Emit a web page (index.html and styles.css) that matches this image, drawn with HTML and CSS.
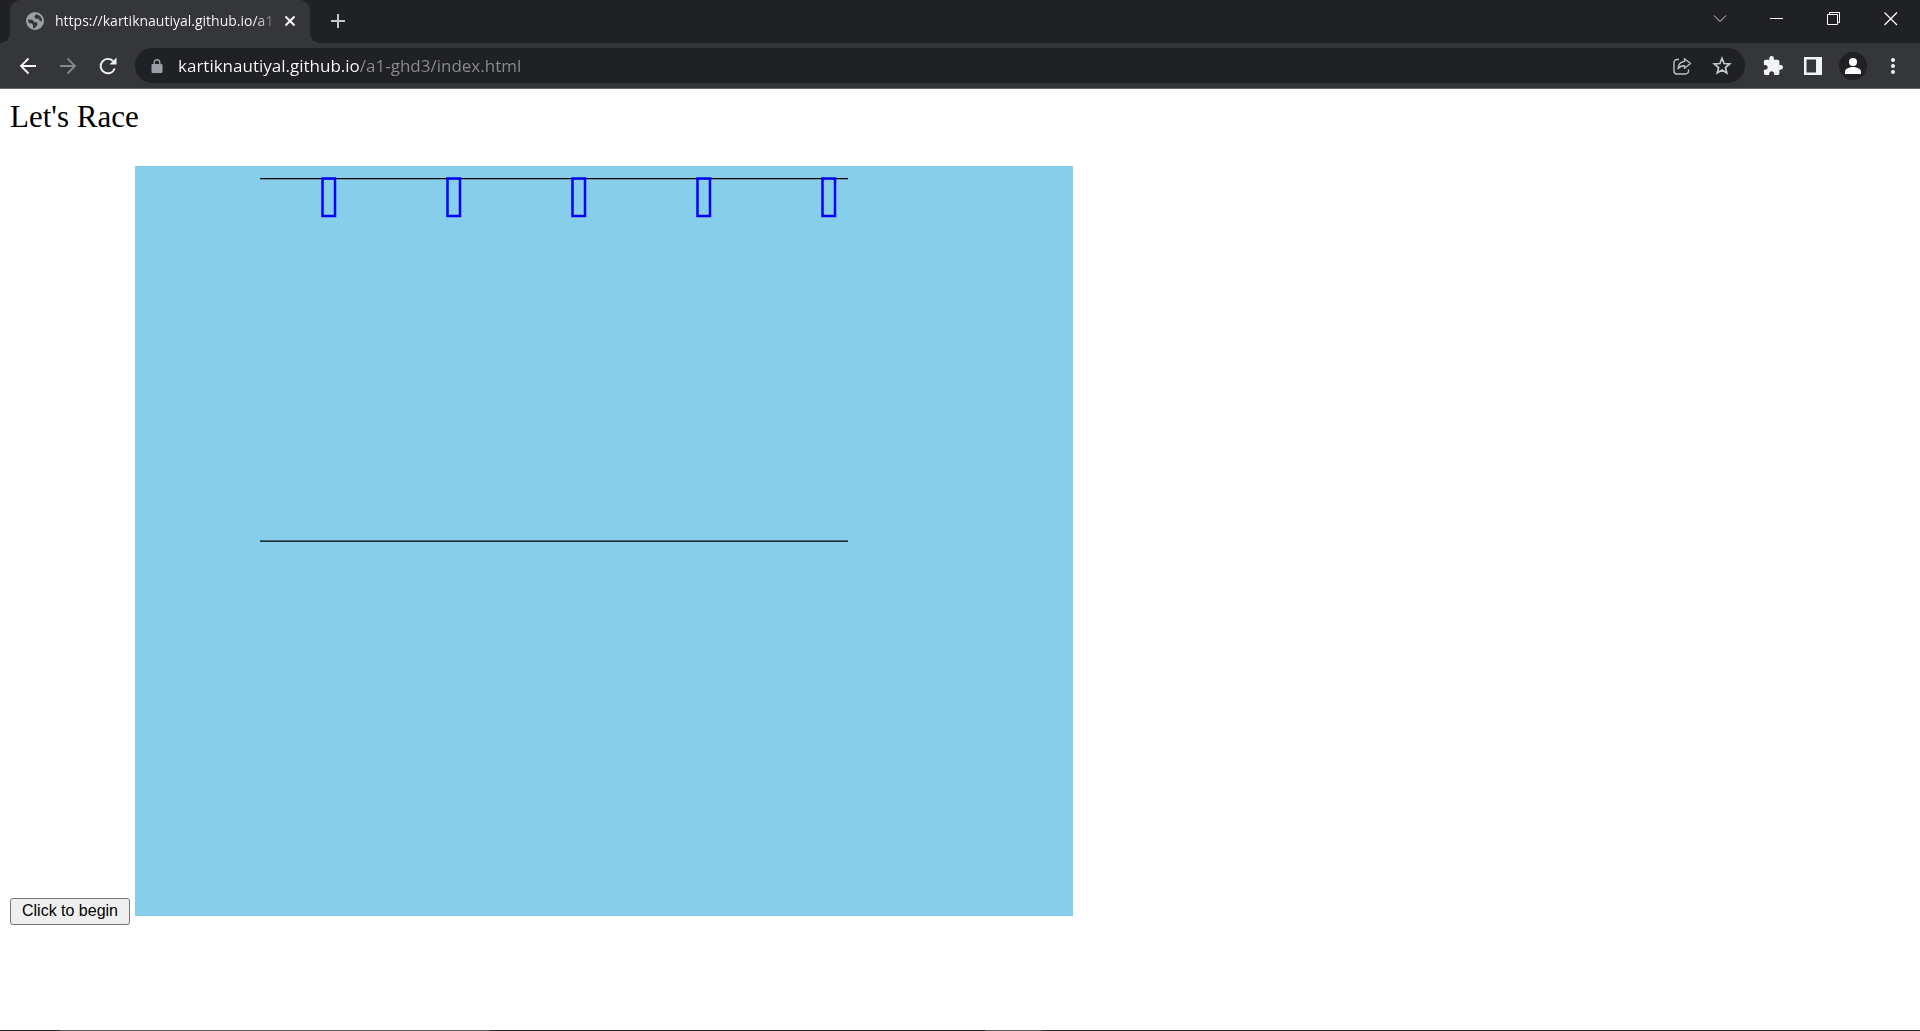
FILE: index.html
```
<!DOCTYPE html>
<html lang="en">
<head>
<meta charset="utf-8">
<title>Let's Race</title>
<link rel="stylesheet" href="styles.css">
</head>
<body>
<header class="browser">
  <div class="tabstrip">
    <div class="tab">
      <svg class="favicon" viewBox="0 0 18 18" aria-hidden="true"><circle cx="9" cy="9" r="9" fill="#9aa0a6"/><path d="M2 7.5l4.500.300 2 2.400h2.800v2.800l-2 2.700-2.300.500v-3.300l-1.700-1.700H3A7 7 0 0 1 2 7.500z" fill="#35363a"/><path d="M10 2.200l-1.700 2.500 1.700 2.300 2.500-.400 1.300 2.500 2.300.300A7 7 0 0 0 10 2.200z" fill="#35363a"/></svg>
      <span class="tab-title">https://kartiknautiyal.github.io/a1</span>
      <button class="plain tab-close" aria-label="Close tab"><svg width="12" height="12" viewBox="0 0 12 12"><path d="M1.500 1.500l9 9m0-9l-9 9" stroke="#fff" stroke-width="2" fill="none"/></svg></button>
    </div>
    <button class="plain new-tab" aria-label="New tab"><svg width="16" height="16" viewBox="0 0 16 16"><path d="M8 1v14M1 8h14" stroke="#c4c7cb" stroke-width="2" fill="none"/></svg></button>
    <div class="window-controls">
      <button class="plain window-button" aria-label="Search tabs"><svg width="14" height="8" viewBox="0 0 14 8"><path d="M1 .500l6 6 6-6" stroke="#d8d8d8" fill="none"/></svg></button>
      <button class="plain window-button" aria-label="Minimize"><svg width="14" height="14" viewBox="0 0 14 14"><path d="M0 6.500h13" stroke="#fff" fill="none"/></svg></button>
      <button class="plain window-button" aria-label="Restore"><svg width="14" height="14" viewBox="0 0 14 14"><path d="M.500 2.500h10v10H.500zM2.500 2.500v-2h10v10h-2" stroke="#fff" fill="none"/></svg></button>
      <button class="plain window-button" aria-label="Close"><svg width="14" height="14" viewBox="0 0 14 14"><path d="M.500.500l12.500 12.500m0-12.500L.500 13" stroke="#fff" stroke-width="1.200" fill="none"/></svg></button>
    </div>
  </div>
  <div class="toolbar">
    <button class="plain tool" aria-label="Back"><svg width="18" height="18" viewBox="0 0 18 18"><path d="M17 9H2m7.500-7.500L2 9l7.500 7.500" stroke="#fff" stroke-width="1.800" fill="none"/></svg></button>
    <button class="plain tool" aria-label="Forward"><svg width="18" height="18" viewBox="0 0 18 18"><path d="M1 9h15M8.500 1.500L16 9l-7.500 7.500" stroke="#85878a" stroke-width="1.800" fill="none"/></svg></button>
    <button class="plain tool" aria-label="Reload"><svg width="18" height="18" viewBox="0 0 18 18"><path d="M15.700 11.500A7.200 7.200 0 1 1 14 4" stroke="#f1f3f4" stroke-width="1.900" fill="none"/><path d="M17.500.500v7h-7z" fill="#f1f3f4"/></svg></button>
    <div class="omnibox">
      <svg class="lock" width="12" height="14" viewBox="0 0 12 14" aria-hidden="true"><path d="M3.200 6V3.500a2.800 2.800 0 0 1 5.600 0V6" stroke="#9aa0a6" stroke-width="1.400" fill="none"/><rect x=".500" y="5" width="11" height="9" rx="1.300" fill="#9aa0a6"/></svg>
      <input class="address" type="text" aria-label="Address" value="kartiknautiyal.github.io/a1-ghd3/index.html">
      <button class="plain tool" aria-label="Share"><svg width="19" height="18" viewBox="0 0 19 18"><path d="M6 2.500H4a3 3 0 0 0-3 3V14a3 3 0 0 0 3 3h8.500a3 3 0 0 0 3-3v-1.500" stroke="#bdc1c6" stroke-width="1.400" fill="none"/><path d="M11.500 1.700l6 4.800-6 4.800V8.700C8.500 8.600 6.500 9.500 5 11.700c.300-4 2.700-6.900 6.500-7.300z" stroke="#bdc1c6" stroke-width="1.400" stroke-linejoin="round" fill="none"/></svg></button>
      <button class="plain tool" aria-label="Bookmark"><svg width="20" height="20" viewBox="0 0 20 20"><path d="M10 2.300l2.100 5.200 5.600.400-4.300 3.600 1.400 5.500-4.800-3-4.800 3 1.400-5.500-4.300-3.600 5.600-.400z" stroke="#c4c7cb" stroke-width="1.700" fill="none"/></svg></button>
    </div>
    <button class="plain tool" aria-label="Extensions"><svg width="20" height="20" viewBox="1 1 22 22"><path fill="#f1f3f4" d="M20.500 11H19V7c0-1.100-.900-2-2-2h-4V3.500a2.500 2.500 0 0 0-5 0V5H4c-1.100 0-1.990.900-1.990 2v3.800H3.500c1.490 0 2.700 1.210 2.700 2.700s-1.210 2.700-2.700 2.700H2V20c0 1.100.900 2 2 2h3.800v-1.500c0-1.490 1.210-2.700 2.700-2.700s2.700 1.210 2.700 2.700V22H17c1.100 0 2-.900 2-2v-4h1.500a2.500 2.500 0 0 0 0-5z"/></svg></button>
    <button class="plain tool" aria-label="Side panel"><svg width="18" height="18" viewBox="0 0 18 18"><path fill="#f1f3f4" fill-rule="evenodd" d="M0 0h18v18H0zM2.500 2.500v13h9.500v-13z"/></svg></button>
    <button class="plain tool" aria-label="Profile"><svg width="28" height="28" viewBox="0 0 28 28"><circle cx="14" cy="14" r="14" fill="#202124"/><circle cx="14" cy="10" r="4" fill="#fff"/><path d="M6 22v-2.500c0-3 5-4.500 8-4.500s8 1.500 8 4.500V22z" fill="#fff"/></svg></button>
    <button class="plain tool" aria-label="Menu"><svg width="4" height="16" viewBox="0 0 4 16"><g fill="#f1f3f4"><circle cx="2" cy="2" r="2"/><circle cx="2" cy="8" r="2"/><circle cx="2" cy="14" r="2"/></g></svg></button>
  </div>
</header>
<main class="page">
  <div class="heading">Let's Race</div>
  <div class="race">
    <button class="begin">Click to begin</button>
    <svg class="track" width="938" height="750" viewBox="0 0 750 600" preserveAspectRatio="xMinYMin" role="img" aria-label="Race track">
      <path d="M100 10h470.400M100 300h470.400" stroke="#000" fill="none"/>
      <g fill="none" stroke="#00f" stroke-width="2">
        <rect x="150" y="10" width="10" height="30"/>
        <rect x="250" y="10" width="10" height="30"/>
        <rect x="350" y="10" width="10" height="30"/>
        <rect x="450" y="10" width="10" height="30"/>
        <rect x="550" y="10" width="10" height="30"/>
      </g>
    </svg>
  </div>
</main>
<div class="taskbar-edge"></div>
</body>
</html>
```
FILE: styles.css
```
* { box-sizing: border-box; }
body {
  margin: 0;
  min-height: 100vh;
  display: flex;
  flex-direction: column;
  background: #fff;
  color: #000;
  font-family: "Liberation Serif", serif;
}
.browser {
  background: #35363a;
  border-bottom: 1px solid #646567;
  font-family: "Open Sans", "Noto Sans", sans-serif;
}
.plain {
  display: flex;
  align-items: center;
  justify-content: center;
  padding: 0;
  border: 0;
  background: none;
}
.tabstrip {
  display: flex;
  height: 43px;
  padding: 0 1px 0 10px;
  background: #202124;
}
.tab {
  position: relative;
  display: flex;
  align-items: center;
  width: 300px;
  padding: 0 14px 1px 16px;
  border-radius: 10px 10px 0 0;
  background: #35363a;
}
.tab::before,
.tab::after {
  content: "";
  position: absolute;
  bottom: 0;
  width: 10px;
  height: 10px;
}
.tab::before {
  right: 100%;
  background: radial-gradient(circle at 0 0, #202124 10px, #35363a 10px);
}
.tab::after {
  left: 100%;
  background: radial-gradient(circle at 100% 0, #202124 10px, #35363a 10px);
}
.favicon {
  flex: none;
  width: 18px;
  height: 18px;
  margin-right: 11px;
}
.tab-title {
  flex: 1;
  white-space: nowrap;
  font-size: 14px;
  line-height: 20px;
  color: transparent;
  background: linear-gradient(to right, #fff 200px, #35363a 224px);
  -webkit-background-clip: text;
  background-clip: text;
}
.tab-close { margin-left: 10px; }
.new-tab {
  width: 36px;
  height: 42px;
  margin-left: 10px;
}
.window-controls {
  display: flex;
  margin-left: auto;
}
.window-button {
  width: 57px;
  height: 37px;
}
.toolbar {
  display: flex;
  align-items: center;
  height: 45px;
  padding: 0 7px 0 8px;
}
.tool {
  flex: none;
  width: 40px;
  height: 35px;
}
.omnibox {
  flex: 1;
  display: flex;
  align-items: center;
  height: 35px;
  margin: 0 8px 0 7px;
  padding: 0 3px 0 16px;
  border-radius: 18px;
  background: #202124;
}
.lock { flex: none; }
.address {
  flex: 1;
  min-width: 0;
  height: 28px;
  margin-left: 15px;
  padding: 0;
  border: 0;
  font: 17px/28px "Open Sans", "Noto Sans", sans-serif;
  color: transparent;
  background: linear-gradient(to right, #fff 181px, #8b8d90 181px);
  -webkit-background-clip: text;
  background-clip: text;
}
.page {
  flex: 1;
  padding: 10px;
}
.heading {
  font-size: 31px;
  line-height: 36px;
}
.race {
  display: flex;
  align-items: baseline;
  gap: 5px;
  margin-top: 31px;
}
.begin {
  flex: none;
  width: 120px;
  height: 27px;
  padding: 0;
  border: 1px solid #767676;
  border-radius: 3px;
  background: #efefef;
  color: #000;
  font: 16px/24px "Liberation Sans", Arial, sans-serif;
}
.track {
  flex: none;
  background: skyblue;
}
.taskbar-edge {
  height: 1px;
  background: linear-gradient(to right, #25292c 60px, #5c5b5c 60px 490px, #25282d 490px 986px, #5c5b5c 986px 1042px, #2b2b2d 1042px);
}
```
